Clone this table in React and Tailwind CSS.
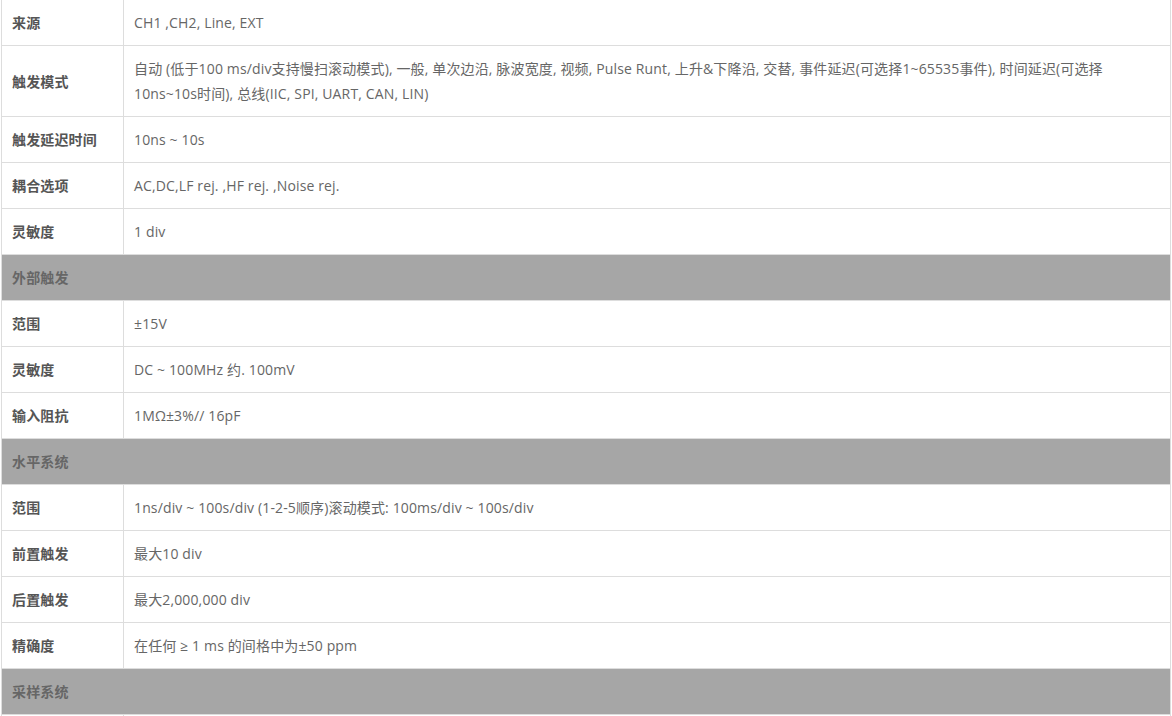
import React from 'react';

const rows = [
  { label: '来源', value: 'CH1 ,CH2, Line, EXT' },
  {
    label: '触发模式',
    value:
      '自动 (低于100 ms/div支持慢扫滚动模式), 一般, 单次边沿, 脉波宽度, 视频, Pulse Runt, 上升&下降沿, 交替, 事件延迟(可选择1~65535事件), 时间延迟(可选择10ns~10s时间), 总线(IIC, SPI, UART, CAN, LIN)',
  },
  { label: '触发延迟时间', value: '10ns ~ 10s' },
  { label: '耦合选项', value: 'AC,DC,LF rej. ,HF rej. ,Noise rej.' },
  { label: '灵敏度', value: '1 div' },
  { section: '外部触发' },
  { label: '范围', value: '±15V' },
  { label: '灵敏度', value: 'DC ~ 100MHz 约. 100mV' },
  { label: '输入阻抗', value: '1MΩ±3%// 16pF' },
  { section: '水平系统' },
  { label: '范围', value: '1ns/div ~ 100s/div (1-2-5顺序)滚动模式: 100ms/div ~ 100s/div' },
  { label: '前置触发', value: '最大10 div' },
  { label: '后置触发', value: '最大2,000,000 div' },
  { label: '精确度', value: '在任何 ≥ 1 ms 的间格中为±50 ppm' },
  { section: '采样系统' },
  // next row starts just at the bottom edge, nothing readable shows
  { label: '', value: '' },
];

const SpecRow = ({ row }) => {
  if (row.section) {
    return (
      <div className="flex border-b border-[#dddddd] bg-[#a6a6a6]">
        <div className="px-[10px] py-[10px] leading-[25px] font-bold text-[#666666]">{row.section}</div>
      </div>
    );
  }
  return (
    <div className="flex min-h-[46px] border-b border-[#dddddd]">
      <div className="w-[122px] shrink-0 border-r border-[#dddddd] px-[10px] py-[10px] leading-[25px] font-bold text-[#555555] flex items-center">
        {row.label}
      </div>
      <div className="flex-1 px-[10px] py-[10px] leading-[25px] text-[#666666]">{row.value}</div>
    </div>
  );
};

export default function App() {
  return (
    <div className="h-screen bg-white overflow-hidden">
      <div
        className="ml-px w-[1170px] border-l border-r border-[#dddddd] text-[14px] tracking-[0.14px]"
        style={{ fontFamily: '"Open Sans", "Noto Sans CJK SC", sans-serif' }}
      >
        {rows.map((row, i) => (
          <SpecRow key={i} row={row} />
        ))}
      </div>
    </div>
  );
}
